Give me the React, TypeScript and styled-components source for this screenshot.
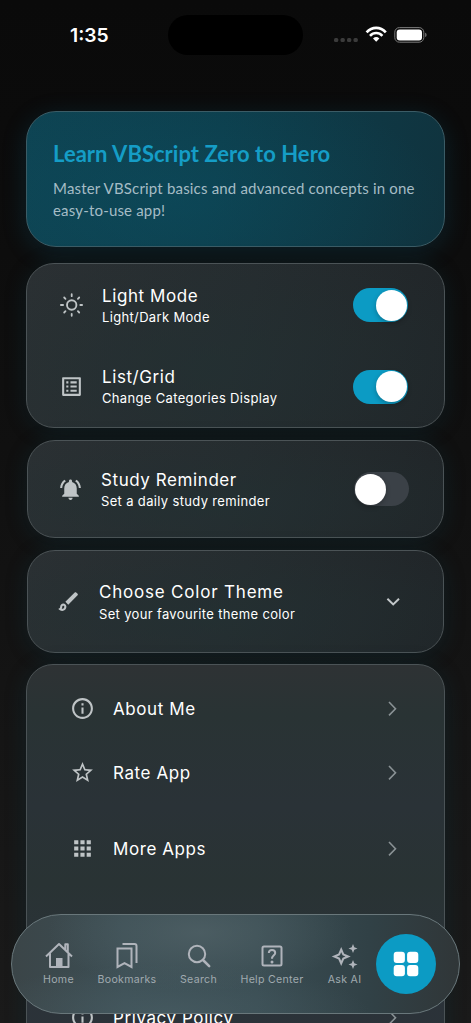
import React from "react";
import styled, { createGlobalStyle } from "styled-components";
import {
  MdOutlineListAlt,
  MdNotificationsActive,
  MdOutlineBrush,
  MdInfoOutline,
  MdStarBorder,
  MdApps,
} from "react-icons/md";

const ACCENT = "#0c9bc4";

const GlobalStyle = createGlobalStyle`
  * { box-sizing: border-box; }
  html, body { margin: 0; background: #0b0b0b; overflow: hidden; }
  body { font-family: Inter, "Liberation Sans", sans-serif; -webkit-font-smoothing: antialiased; }
`;

const Screen = styled.div`
  position: relative;
  width: 471px;
  height: 1023px;
  overflow: hidden;
  background: linear-gradient(180deg, #0a0a0a 0%, #0b0b0b 12%, #111111 50%, #1a1a1a 100%);
`;

const StatusBar = styled.header`
  display: flex;
  height: 111px;
  padding: 15px 43px 0 70px;
  align-items: flex-start;
`;

const Clock = styled.div`
  width: 98px;
  padding-top: 9px;
  font-size: 19.3px;
  line-height: 23px;
  font-weight: 600;
  color: #fff;
`;

const Island = styled.div`
  width: 135px;
  height: 40px;
  border-radius: 20px;
  background: #000;
`;

const StatusIcons = styled.div`
  display: flex;
  margin-left: auto;
  padding-top: 11px;
`;

const CardList = styled.main`
  display: flex;
  flex-direction: column;
`;

const Hero = styled.section`
  height: 136px;
  margin: 0 26px;
  padding: 28px 26px 0;
  border: 1px solid #3b5c66;
  border-radius: 30px;
  background:
    radial-gradient(ellipse 65% 90% at 35% 65%, rgba(12, 78, 96, 0.5), rgba(12, 78, 96, 0) 100%),
    linear-gradient(100deg, #0e4352 0%, #0d3e4c 45%, #10333e 100%);
  box-shadow: 0 5px 24px rgba(12, 110, 145, 0.22);
`;

const HeroTitle = styled.h1`
  margin: 0;
  font-family: Lato, sans-serif;
  font-size: 22px;
  line-height: 28px;
  font-weight: 700;
  letter-spacing: 0.03px;
  color: #159dc6;
  white-space: nowrap;
`;

const HeroText = styled.p`
  margin: 9px 0 0;
  font-family: Lato, sans-serif;
  font-size: 15px;
  line-height: 22px;
  letter-spacing: 0.18px;
  color: #a5bcc5;
  white-space: nowrap;
`;

const Card = styled.section<{ $h: number; $top: number; $inset?: number; $tall?: boolean }>`
  display: flex;
  flex-direction: column;
  flex-shrink: 0;
  height: ${(p) => p.$h}px;
  margin: ${(p) => p.$top}px ${(p) => p.$inset ?? 26}px 0;
  border: 1px solid #4b5356;
  border-radius: ${(p) => (p.$tall ? 27 : 28)}px;
  background: ${(p) =>
    p.$tall
      ? "linear-gradient(180deg, #2e3234 0%, #293334 12%, #2a3237 34%, #293334 52%, #2b3239 75%, #2b3338 100%)"
      : "radial-gradient(ellipse 75% 80% at 45% 65%, rgba(34,49,51,.65), rgba(34,49,51,0)), linear-gradient(105deg, #2b3033 0%, #262c2f 50%, #202528 100%)"};
  box-shadow: 0 3px 22px rgba(15, 75, 90, 0.22);
`;

const SettingRow = styled.div<{ $h: number; $left?: number; $right?: number }>`
  display: flex;
  align-items: center;
  flex-shrink: 0;
  height: ${(p) => p.$h}px;
  padding: 0 ${(p) => p.$right ?? 36}px 0 ${(p) => p.$left ?? 32}px;
`;

const IconBox = styled.div<{ $w: number }>`
  display: flex;
  flex-shrink: 0;
  width: ${(p) => p.$w}px;
  color: #bfc4c6;
`;

const Labels = styled.div`
  flex: 1;
  padding-top: 2px;
  white-space: nowrap;
`;

const Title = styled.div<{ $track?: number }>`
  font-size: 17px;
  line-height: 22px;
  font-weight: 400;
  letter-spacing: ${(p) => p.$track ?? 0.58}px;
  color: #fff;
`;

const Subtitle = styled.div<{ $gap?: number }>`
  margin-top: ${(p) => p.$gap ?? 0}px;
  font-size: 13px;
  line-height: 21px;
  font-weight: 400;
  letter-spacing: 0.34px;
  color: #fff;
`;

const Track = styled.button<{ $on: boolean }>`
  display: flex;
  justify-content: ${(p) => (p.$on ? "flex-end" : "flex-start")};
  align-items: center;
  width: 55px;
  height: 34px;
  padding: 0 1.3px;
  border: 0;
  border-radius: 17px;
  background: ${(p) => (p.$on ? ACCENT : "#3b4147")};
`;

const Knob = styled.span`
  width: 31px;
  height: 31px;
  border-radius: 50%;
  background: #fff;
  box-shadow: 0 2px 5px rgba(0, 0, 0, 0.25);
`;

const MenuRow = styled.div<{ $h: number }>`
  display: flex;
  align-items: center;
  flex-shrink: 0;
  height: ${(p) => p.$h}px;
  padding: 0 47px 0 43px;
`;

const NavBar = styled.nav`
  position: absolute;
  left: 11px;
  top: 914px;
  width: 449px;
  height: 100px;
  display: flex;
  padding: 0 23px 0 10px;
  border: 1px solid #69777b;
  border-radius: 50px;
  background:
    radial-gradient(ellipse 34% 60% at 42% 18%, rgba(84, 101, 106, 0.65), rgba(84, 101, 106, 0)),
    radial-gradient(ellipse 45% 50% at 35% 100%, rgba(76, 97, 104, 0.55), rgba(76, 97, 104, 0)),
    linear-gradient(90deg, #3b4548 0%, #3c4e54 25%, #394c52 55%, #314146 80%, #303638 100%);
`;

const NavItem = styled.div<{ $w: number; $gap?: number }>`
  display: flex;
  flex-direction: column;
  flex-shrink: 0;
  align-items: center;
  width: ${(p) => p.$w}px;
  margin-left: ${(p) => p.$gap ?? 0}px;
  padding-top: 25px;
  font-size: 10.6px;
  line-height: 14px;
  letter-spacing: 0.3px;
  color: #a0aaaf;
  white-space: nowrap;
`;

const NavIcon = styled.svg`
  display: block;
  width: 32px;
  height: 32px;
  margin-bottom: 1px;
  fill: none;
  stroke: #b0b4bb;
  stroke-width: 2;
`;

const ActiveButton = styled.button`
  display: flex;
  align-items: center;
  justify-content: center;
  flex-shrink: 0;
  width: 60px;
  height: 60px;
  margin: 19px 0 0 auto;
  padding: 0;
  border: 0;
  border-radius: 50%;
  background: ${ACCENT};
`;

const SunIcon = () => (
  <svg width="24" height="24" viewBox="-0.7 0 24 24" fill="none" stroke="currentColor" strokeWidth="1.9">
    <circle cx="12" cy="12" r="4.7" />
    <path
      strokeLinecap="round"
      strokeWidth="1.8"
      d="M12 1.2v2M12 20.8v2M1.2 12h2.2M20.6 12h1.8M4.5 4.5l1.3 1.3M18.2 18.2l1.3 1.3M4.5 19.5l1.3-1.3M18.2 5.8l1.3-1.3"
    />
  </svg>
);

const ChevronRight = () => (
  <svg width="9" height="17" viewBox="0 0 9 17" fill="none" stroke="#8a9295" strokeWidth="1.6">
    <path d="M1 2L7.5 8.7L1 15.4" />
  </svg>
);

const ChevronDown = () => (
  <svg width="14" height="10" viewBox="0 0 14 10" fill="none" stroke="#c2c7c9" strokeWidth="2">
    <path d="M1.4 1.8L7.2 7.4L13 1.8" />
  </svg>
);

const Switch = ({ on }: { on: boolean }) => (
  <Track $on={on} role="switch" aria-checked={on}>
    <Knob />
  </Track>
);

const MenuItem = ({ h, icon, label }: { h: number; icon: React.ReactNode; label: string }) => (
  <MenuRow $h={h}>
    <IconBox $w={43}>{icon}</IconBox>
    <Labels>
      <Title>{label}</Title>
    </Labels>
    <ChevronRight />
  </MenuRow>
);

export default function App() {
  return (
    <Screen>
      <GlobalStyle />
      <StatusBar>
        <Clock>1:35</Clock>
        <Island />
        <StatusIcons>
          <svg width="94" height="18" viewBox="0 0 94 18" fill="none">
            <g fill="#3b3b3b">
              <rect x="0" y="12" width="4.3" height="4" rx="1.5" />
              <rect x="6.5" y="12" width="4.3" height="4" rx="1.5" />
              <rect x="13" y="12" width="4.3" height="4" rx="1.5" />
              <rect x="19.5" y="12" width="4.3" height="4" rx="1.5" />
            </g>
            <path d="M32.6 6.3C38 0.4 46.4 0.4 51.8 6.3" stroke="#fff" strokeWidth="2.7" />
            <path d="M36 9.8C39.6 6 44.8 6 48.4 9.8" stroke="#fff" strokeWidth="2.6" />
            <path d="M39 12.4Q42.2 9.8 45.4 12.4L42.2 15.8Z" fill="#fff" />
            <rect x="60.8" y="1.6" width="29" height="14.6" rx="4.6" stroke="#7b7b7b" />
            <rect x="62.7" y="3.4" width="25.3" height="11" rx="3" fill="#fff" />
            <path d="M91.2 6.7C93 7.2 93 10.5 91.2 11Z" fill="#7b7b7b" />
          </svg>
        </StatusIcons>
      </StatusBar>

      <CardList>
        <Hero>
          <HeroTitle>Learn VBScript Zero to Hero</HeroTitle>
          <HeroText>
            Master VBScript basics and advanced concepts in one
            <br />
            easy-to-use app!
          </HeroText>
        </Hero>

        <Card $h={165} $top={16}>
          <SettingRow $h={82}>
            <IconBox $w={43}><SunIcon /></IconBox>
            <Labels>
              <Title>Light Mode</Title>
              <Subtitle>Light/Dark Mode</Subtitle>
            </Labels>
            <Switch on />
          </SettingRow>
          <SettingRow $h={81}>
            <IconBox $w={43}><MdOutlineListAlt size={25} /></IconBox>
            <Labels>
              <Title>List/Grid</Title>
              <Subtitle>Change Categories Display</Subtitle>
            </Labels>
            <Switch on />
          </SettingRow>
        </Card>

        <Card $h={98} $top={12} $inset={27}>
          <SettingRow $h={96} $left={30} $right={34}>
            <IconBox $w={43}><MdNotificationsActive size={25} /></IconBox>
            <Labels>
              <Title>Study Reminder</Title>
              <Subtitle>Set a daily study reminder</Subtitle>
            </Labels>
            <Switch on={false} />
          </SettingRow>
        </Card>

        <Card $h={103} $top={12} $inset={27}>
          <SettingRow $h={101} $left={28} $right={35}>
            <IconBox $w={43}><MdOutlineBrush size={25} /></IconBox>
            <Labels>
              <Title $track={0.8}>Choose Color Theme</Title>
              <Subtitle $gap={1}>Set your favourite theme color</Subtitle>
            </Labels>
            <IconBox $w={22}><ChevronDown /></IconBox>
          </SettingRow>
        </Card>

        <Card $h={420} $top={11} $tall>
          <MenuRow $h={11} />
          <MenuItem h={64} icon={<MdInfoOutline size={25} />} label="About Me" />
          <MenuItem h={64} icon={<MdStarBorder size={25} />} label="Rate App" />
          <MenuItem h={88} icon={<MdApps size={25} />} label="More Apps" />
          <MenuRow $h={93} />
          <MenuItem h={64} icon={<MdInfoOutline size={25} />} label="Privacy Policy" />
        </Card>
      </CardList>

      <NavBar>
        <NavItem $w={73}>
          <NavIcon viewBox="0 0 32 32">
            <path d="M3 16.5L16 4L29 16.5M7 13.5V27H25.5V13.5M22.3 10V4.3H24.8V12" strokeLinejoin="round" />
            <rect x="13" y="18" width="6.5" height="9" fill="#b0b4bb" stroke="none" />
          </NavIcon>
          Home
        </NavItem>
        <NavItem $w={64}>
          <NavIcon viewBox="0 0 32 32">
            <path d="M6.5 8.5H20.5V27L13.5 23.2L6.5 27ZM11.5 4H23.5Q25.5 4 25.5 6V23" />
          </NavIcon>
          Bookmarks
        </NavItem>
        <NavItem $w={79}>
          <NavIcon viewBox="0 0 32 32">
            <circle cx="14" cy="14" r="8.2" />
            <path d="M20 20L26.2 26.2" strokeWidth="2.5" strokeLinecap="round" />
          </NavIcon>
          Search
        </NavItem>
        <NavItem $w={68}>
          <NavIcon viewBox="0 0 32 32">
            <rect x="6.5" y="6.5" width="19" height="19" rx="1.5" />
            <path d="M12.8 13Q13 10 16 10Q19.2 10 19.2 13C19.2 15.2 16 15.5 16 18.7" />
            <circle cx="16" cy="21.9" r="1.5" fill="#b0b4bb" stroke="none" />
          </NavIcon>
          Help Center
        </NavItem>
        <NavItem $w={63} $gap={7}>
          <NavIcon viewBox="0 0 32 32">
            <path d="M12.2 9.5L14.3 14.4L19.2 16.5L14.3 18.6L12.2 23.5L10.1 18.6L5.2 16.5L10.1 14.4Z" />
            <path
              fill="#b0b4bb"
              stroke="none"
              d="M24 4L25.3 7.2L28.5 8.5L25.3 9.8L24 13L22.7 9.8L19.5 8.5L22.7 7.2ZM24 20L25.3 23.2L28.5 24.5L25.3 25.8L24 29L22.7 25.8L19.5 24.5L22.7 23.2Z"
            />
          </NavIcon>
          Ask AI
        </NavItem>
        <ActiveButton aria-label="More">
          <svg width="26" height="26" viewBox="0 0 26 26" fill="#fff">
            <rect x="0.7" y="0.7" width="11.2" height="11.2" rx="3" />
            <rect x="14.1" y="0.7" width="11.2" height="11.2" rx="3" />
            <rect x="0.7" y="14.1" width="11.2" height="11.2" rx="3" />
            <rect x="14.1" y="14.1" width="11.2" height="11.2" rx="3" />
          </svg>
        </ActiveButton>
      </NavBar>
    </Screen>
  );
}
